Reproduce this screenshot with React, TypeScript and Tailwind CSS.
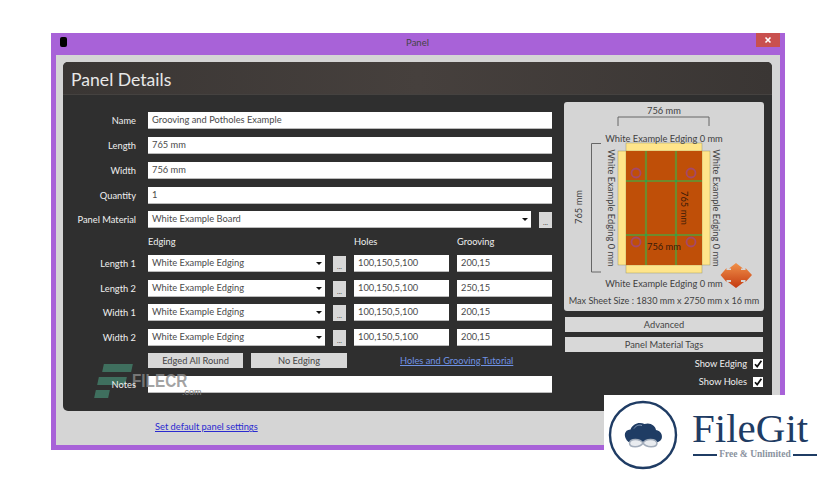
import { ReactNode } from "react";

const edgeRows = [
  { label: "Length 1", grooving: "200,15", mt: "mt-[5px]" },
  { label: "Length 2", grooving: "250,15", mt: "mt-[8px]" },
  { label: "Width 1", grooving: "200,15", mt: "mt-[7px]" },
  { label: "Width 2", grooving: "200,15", mt: "mt-[8px]" },
];

function Label({ children }: { children?: ReactNode }) {
  return <div className="relative z-10 w-[73px] shrink-0 mr-[12px] text-right text-[#f0f0f0] text-[9.3px] leading-none whitespace-nowrap">{children}</div>;
}

function Field({ value, className }: { value?: string; className: string }) {
  return (
    <div className={`h-[17px] bg-white border-b border-[#bbbbbb] pl-[4px] flex items-center text-[#4a4a4a] text-[9.3px] whitespace-nowrap ${className}`}>
      {value}
    </div>
  );
}

function Select({ value, className }: { value: string; className: string }) {
  return (
    <div className={`h-[17px] bg-white border-b border-[#bbbbbb] pl-[4px] pr-[3px] flex items-center justify-between text-[#4a4a4a] text-[9.3px] whitespace-nowrap ${className}`}>
      <span>{value}</span>
      <span className="w-0 h-0 border-x-[3px] border-x-transparent border-t-[3px] border-t-[#111111]" />
    </div>
  );
}

function Dots({ className }: { className: string }) {
  return (
    <div className={`w-[13px] h-[16px] bg-[#d8d8d8] flex items-end justify-center pb-[2px] text-[#444444] text-[7px] leading-none ${className}`}>
      ...
    </div>
  );
}

function Check() {
  return (
    <div className="w-[10px] h-[10px] bg-white flex items-center justify-center">
      <svg width="10" height="10" viewBox="0 0 10 10">
        <path d="M2 5.2 L4.2 7.6 L8.4 1.8" fill="none" stroke="#111111" strokeWidth="1.7" />
      </svg>
    </div>
  );
}

function Diagram() {
  const t = { fontSize: 9.3, fill: "#3f3f3f", textAnchor: "middle" as const };
  return (
    <svg width="200" height="209" viewBox="564 102 200 209" style={{ fontFamily: "Lato, sans-serif" }}>
      <defs>
        <linearGradient id="arrow" x1="0" y1="0" x2="0" y2="1">
          <stop offset="0" stopColor="#f0914a" />
          <stop offset="1" stopColor="#c43a10" />
        </linearGradient>
      </defs>
      <path d="M618 126 V117 H709 V126" fill="none" stroke="#666666" strokeWidth="1" />
      <path d="M601 143.5 H591.5 V272 H601" fill="none" stroke="#666666" strokeWidth="1" />
      <rect x="626" y="143" width="76" height="8" fill="#ffe58a" stroke="#8a8a5a" strokeWidth="0.4" />
      <rect x="626" y="265" width="76" height="8" fill="#ffe58a" stroke="#8a8a5a" strokeWidth="0.4" />
      <rect x="618" y="151" width="8" height="114" fill="#ffe58a" stroke="#8a8a5a" strokeWidth="0.4" />
      <rect x="702" y="151" width="8" height="114" fill="#ffe58a" stroke="#8a8a5a" strokeWidth="0.4" />
      <rect x="626" y="151" width="76" height="114" fill="#bf4f08" />
      <g stroke="#6f8a2c" strokeWidth="2.2">
        <path d="M646 151 V265 M676 151 V265 M626 181 H702 M626 235 H702" />
      </g>
      <g fill="#2fa24a">
        <circle cx="646" cy="181" r="1.3" />
        <circle cx="676" cy="181" r="1.3" />
        <circle cx="646" cy="235" r="1.3" />
        <circle cx="676" cy="235" r="1.3" />
      </g>
      <g fill="none" stroke="#a5486a" strokeWidth="1.8">
        <circle cx="636" cy="173" r="4.5" />
        <circle cx="691" cy="173" r="4.5" />
        <circle cx="636" cy="242" r="4.5" />
        <circle cx="691" cy="242" r="4.5" />
      </g>
      <text x="664" y="113.5" {...t}>756 mm</text>
      <text x="664" y="141.5" {...t}>White Example Edging 0 mm</text>
      <text x="664" y="286.5" {...t}>White Example Edging 0 mm</text>
      <text x="664" y="303.5" {...t} fontSize={9.1}>Max Sheet Size : 1830 mm x 2750 mm x 16 mm</text>
      <text x="664" y="250" {...t} fill="#3a1a08">756 mm</text>
      <text transform="translate(581.5 207) rotate(-90)" {...t}>765 mm</text>
      <text transform="translate(608 208) rotate(90)" {...t}>White Example Edging 0 mm</text>
      <text transform="translate(713 208) rotate(90)" {...t}>White Example Edging 0 mm</text>
      <text transform="translate(681 208) rotate(90)" {...t} fill="#3a1a08">765 mm</text>
      <path
        d="M736 263 L743 268.5 H741 V270 H745.5 V268 L752 275 L745.5 282 V280 H741 V282 H744 L736 288 L728 282 H731 V280 H726.5 V282 L720.5 275 L726.5 268 V270 H731 V268.5 H729 Z"
        fill="url(#arrow)"
      />
    </svg>
  );
}

function FileGitLogo() {
  return (
    <div className="absolute left-[604px] top-[395px] w-[232px] h-[89px] bg-white">
      <svg className="absolute left-[4px] top-[5px]" width="70" height="70" viewBox="0 0 70 70">
        <circle cx="35" cy="35" r="33" fill="none" stroke="#1f3c64" strokeWidth="2.4" />
        <path
          d="M17.5 38 C15.5 33 18.5 29.5 22.5 29.5 C24.5 24 31 21.5 36.5 24 C42 22 47.5 25.5 48 30 C53 30.5 55 35.5 53.5 39 C51.5 43 46 43 43 42 L27 42 C24 44 19.5 43 17.5 38 Z"
          fill="#1f3c64"
        />
        <path d="M26 28.5 C28 25.5 31 24.5 34 25.5" fill="none" stroke="#8fa2bd" strokeWidth="0.9" />
        <path
          d="M35 43 C32 38.5 22.5 38 21.5 43 C21.5 48 32 48 35 43 C38 38 48 38.5 49 43 C49 48 38 48 35 43 Z"
          fill="#e9ecf0"
          stroke="#a3adbb"
          strokeWidth="1.5"
        />
      </svg>
      <div className="absolute left-[88px] top-[8px] text-[#1f3c64] text-[41px] leading-[50px] font-['Liberation_Serif',serif]">FileGit</div>
      <div className="absolute left-[89px] top-[55px] w-[124px] flex items-center justify-between">
        <div className="w-[24px] h-[2px] bg-[#1f3c64]" />
        <div className="text-[#8b93a0] text-[9.5px] font-bold font-['Liberation_Serif',serif] leading-none">Free &amp; Unlimited</div>
        <div className="w-[24px] h-[2px] bg-[#1f3c64]" />
      </div>
    </div>
  );
}

function Watermark() {
  return (
    <div className="absolute left-[95px] top-[364px] w-[106px] h-[36px]">
      <div className="absolute left-[8px] top-0 w-[29px] h-[8px] bg-[#3f6f5e] -skew-x-12" />
      <div className="absolute left-[3px] top-[13px] w-[28px] h-[8px] bg-[#3f6f5e] -skew-x-12" />
      <div className="absolute left-0 top-[26px] w-[14px] h-[8px] bg-[#3f6f5e] -skew-x-12" />
      <div className="absolute left-[37px] top-[7px] origin-left scale-x-[0.85] text-[#8a8a8a]/80 text-[18px] leading-[20px] font-bold font-['Liberation_Sans',sans-serif]">FILECR</div>
      <div className="absolute left-[87px] top-[23px] text-[#808080] text-[9px] leading-[10px] font-['Liberation_Sans',sans-serif]">.com</div>
    </div>
  );
}

export default function App() {
  return (
    <div className="relative w-[836px] h-[484px] bg-white overflow-hidden pt-[33px] pl-[51px] font-['Lato',sans-serif]">
      <div className="w-[734px] h-[417px] bg-[#a862d8] flex flex-col">
        {/* title bar */}
        <div className="h-[22px] shrink-0 relative flex items-center justify-center text-[#444444] text-[9.5px]">
          <span className="ml-[-1px] mt-[-2px]">Panel</span>
          <div className="absolute left-[9px] top-[4px] w-[7px] h-[10px] bg-black rounded-[2px]" />
          <div className="absolute right-[5px] top-0 w-[24px] h-[14px] bg-[#c9504f] flex items-center justify-center">
            <svg width="8" height="8" viewBox="0 0 8 8">
              <path d="M1.5 1.5 L6.5 6.5 M6.5 1.5 L1.5 6.5" stroke="#ffffff" strokeWidth="1.6" />
            </svg>
          </div>
        </div>

        <div className="flex-1 mx-[5px] mb-[5px] bg-[#d5d5d5] pt-[7px] pl-[7px]">
          <div className="w-[709px] h-[349px] bg-[#2f2f2f] rounded-[5px] overflow-hidden">
            <div className="h-[33px] flex items-center pl-[8px] pt-[4px] bg-gradient-to-r from-[#3a3634] via-[#46403d] to-[#3a3634] border-b border-[#454240] text-[#e8e8e8] text-[17.6px]">
              Panel Details
            </div>

            <div className="flex">
              {/* form */}
              <div className="w-[489px] shrink-0 pt-[17px]">
                <div className="flex items-center">
                  <Label>Name</Label>
                  <Field value="Grooving and Potholes Example" className="w-[404px]" />
                </div>
                <div className="flex items-center mt-[8px]">
                  <Label>Length</Label>
                  <Field value="765 mm" className="w-[404px]" />
                </div>
                <div className="flex items-center mt-[8px]">
                  <Label>Width</Label>
                  <Field value="756 mm" className="w-[404px]" />
                </div>
                <div className="flex items-center mt-[8px]">
                  <Label>Quantity</Label>
                  <Field value="1" className="w-[404px]" />
                </div>
                <div className="flex items-center mt-[7px]">
                  <Label>Panel Material</Label>
                  <Select value="White Example Board" className="w-[383px]" />
                  <Dots className="ml-[8px]" />
                </div>

                <div className="flex items-center h-[16px] mt-[6px] text-[#f0f0f0] text-[9.3px]">
                  <div className="w-[85px] shrink-0" />
                  <div className="w-[206px] shrink-0">Edging</div>
                  <div className="w-[103px] shrink-0">Holes</div>
                  <div>Grooving</div>
                </div>

                {edgeRows.map((row) => (
                  <div key={row.label} className={`flex items-center ${row.mt}`}>
                    <Label>{row.label}</Label>
                    <Select value="White Example Edging" className="w-[177px]" />
                    <Dots className="ml-[8px]" />
                    <Field value="100,150,5,100" className="w-[95px] ml-[8px]" />
                    <Field value={row.grooving} className="w-[95px] ml-[8px]" />
                  </div>
                ))}

                <div className="flex items-center mt-[7px] text-[#444444] text-[9.3px]">
                  <div className="w-[85px] shrink-0" />
                  <div className="w-[95px] h-[15px] bg-[#d8d8d8] flex items-center justify-center">Edged All Round</div>
                  <div className="w-[96px] h-[15px] ml-[8px] bg-[#d8d8d8] flex items-center justify-center">No Edging</div>
                  <div className="ml-[53px] text-[#6f93e6] underline whitespace-nowrap">Holes and Grooving Tutorial</div>
                </div>

                <div className="flex items-center mt-[8px]">
                  <Label>Notes</Label>
                  <Field className="w-[404px]" />
                </div>
              </div>

              {/* preview */}
              <div className="w-[200px] ml-[12px] pt-[7px]">
                <div className="w-[200px] h-[209px] bg-[#d5d5d5] rounded-[3px] overflow-hidden">
                  <Diagram />
                </div>
                <div className="mx-[1px] mt-[6px] h-[15px] bg-[#d8d8d8] flex items-center justify-center text-[#444444] text-[9.3px]">Advanced</div>
                <div className="mx-[1px] mt-[5px] h-[15px] bg-[#d8d8d8] flex items-center justify-center text-[#444444] text-[9.3px]">Panel Material Tags</div>
                <div className="flex items-center justify-end gap-[6px] mr-[1px] mt-[7px] h-[10px] text-[#f0f0f0] text-[9.3px] leading-none">
                  Show Edging <Check />
                </div>
                <div className="flex items-center justify-end gap-[6px] mr-[1px] mt-[8px] h-[10px] text-[#f0f0f0] text-[9.3px] leading-none">
                  Show Holes <Check />
                </div>
              </div>
            </div>
          </div>

          <div className="mt-[9px] ml-[92px] text-[#2a2ad0] underline text-[9.3px]">Set default panel settings</div>
        </div>
      </div>

      <Watermark />
      <FileGitLogo />
    </div>
  );
}
